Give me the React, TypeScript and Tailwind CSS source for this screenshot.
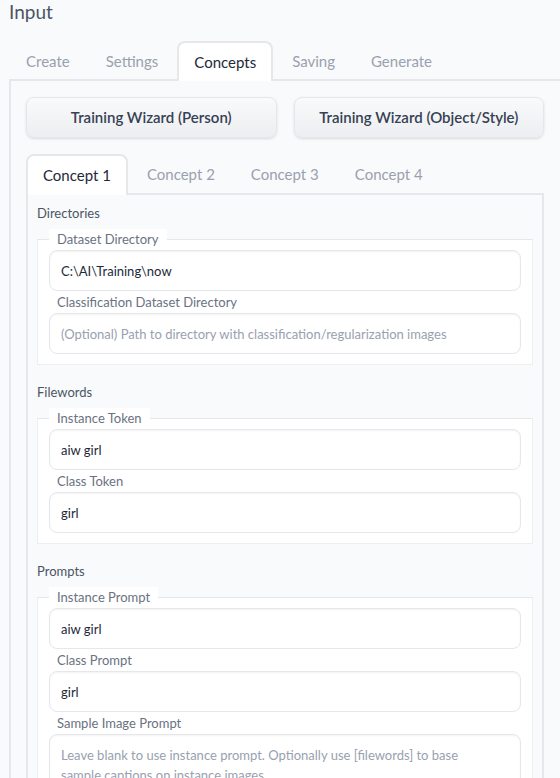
const Field = ({ value, placeholder }: { value?: string; placeholder?: string }) => (
  <input
    readOnly
    defaultValue={value}
    placeholder={placeholder}
    className="block w-full h-[41px] rounded-lg border border-gray-200 bg-white px-[11px] text-[13px] text-gray-800 placeholder:text-gray-400 shadow-[inset_0_1px_2px_rgba(0,0,0,0.05)] outline-none"
  />
)

const Label = ({ children }: { children: string }) => (
  <div className="h-[22px] pl-2 text-[13px] leading-[22px] text-gray-500">{children}</div>
)

const Group = ({ legend, children }: { legend: string; children: React.ReactNode }) => (
  <fieldset className="mt-[6px] border border-[#eceef1] border-t-gray-200 bg-white px-[11px] pb-[10px]">
    <legend className="bg-white px-2 text-[13px] leading-5 text-gray-500">{legend}</legend>
    <div className="pt-px">{children}</div>
  </fieldset>
)

const Heading = ({ children, first }: { children: string; first?: boolean }) => (
  <div className={first ? "text-[13px] leading-5 text-gray-600" : "mt-[17px] text-[13px] leading-5 text-gray-600"}>{children}</div>
)

const App = () => {
  const mainTabs = ["Create", "Settings", "Concepts", "Saving", "Generate"]
  const conceptTabs = ["Concept 1", "Concept 2", "Concept 3", "Concept 4"]

  return (
    <div className="w-[560px] h-[778px] overflow-hidden bg-[#f9fafb] pl-[9px] font-['Lato','Noto_Sans',sans-serif]">
      <h2 className="text-[19px] leading-6 text-gray-600">Input</h2>

      <div className="mt-[17px] w-[553px]">
        <div className="relative z-10 -mb-[2px] flex gap-[2px]">
          {mainTabs.map((t) =>
            t === "Concepts" ? (
              <div key={t} className="h-[40px] px-[15px] flex items-center rounded-t-lg border-2 border-b-0 border-gray-200 bg-white text-[15px] text-gray-800">
                {t}
              </div>
            ) : (
              <div key={t} className="h-[40px] px-[17px] flex items-center text-[15px] text-gray-400">
                {t}
              </div>
            )
          )}
        </div>

        <div className="border-2 border-gray-200 pl-[15px] pr-4 pt-4">
          <div className="grid grid-cols-2 gap-[17px]">
            <button className="h-[41px] rounded-lg border border-gray-200 bg-linear-to-b from-[#f9fafb] to-[#eceef1] text-[15px] font-semibold text-gray-700 shadow-sm">
              Training Wizard (Person)
            </button>
            <button className="h-[41px] rounded-lg border border-gray-200 bg-linear-to-b from-[#f9fafb] to-[#eceef1] text-[15px] font-semibold text-gray-700 shadow-sm">
              Training Wizard (Object/Style)
            </button>
          </div>

          <div className="mt-[16px]">
            <div className="relative z-10 -mb-[2px] flex gap-[2px]">
              {conceptTabs.map((t, i) =>
                i === 0 ? (
                  <div key={t} className="h-[41px] px-[15px] flex items-center rounded-t-lg border-2 border-b-0 border-gray-200 bg-white text-[15px] text-gray-800">
                    {t}
                  </div>
                ) : (
                  <div key={t} className="h-[41px] px-[17px] flex items-center text-[15px] text-gray-400">
                    {t}
                  </div>
                )
              )}
            </div>

            <div className="border-2 border-gray-200 bg-[#f9fafb] px-[9px] pt-2 pb-10">
              <Heading first>Directories</Heading>
              <Group legend="Dataset Directory">
                <Field value="C:\AI\Training\now" />
                <Label>Classification Dataset Directory</Label>
                <Field placeholder="(Optional) Path to directory with classification/regularization images" />
              </Group>

              <Heading>Filewords</Heading>
              <Group legend="Instance Token">
                <Field value="aiw girl" />
                <Label>Class Token</Label>
                <Field value="girl" />
              </Group>

              <Heading>Prompts</Heading>
              <Group legend="Instance Prompt">
                <Field value="aiw girl" />
                <Label>Class Prompt</Label>
                <Field value="girl" />
                <Label>Sample Image Prompt</Label>
                <textarea
                  readOnly
                  rows={3}
                  placeholder="Leave blank to use instance prompt. Optionally use [filewords] to base sample captions on instance images."
                  className="block w-full resize-none rounded-lg border border-gray-200 bg-white pl-[11px] pr-[40px] py-[10px] text-[13px] leading-5 text-gray-800 placeholder:text-gray-400 shadow-[inset_0_1px_2px_rgba(0,0,0,0.05)] outline-none"
                />
              </Group>
            </div>
          </div>
        </div>
      </div>
    </div>
  )
}

export default App
